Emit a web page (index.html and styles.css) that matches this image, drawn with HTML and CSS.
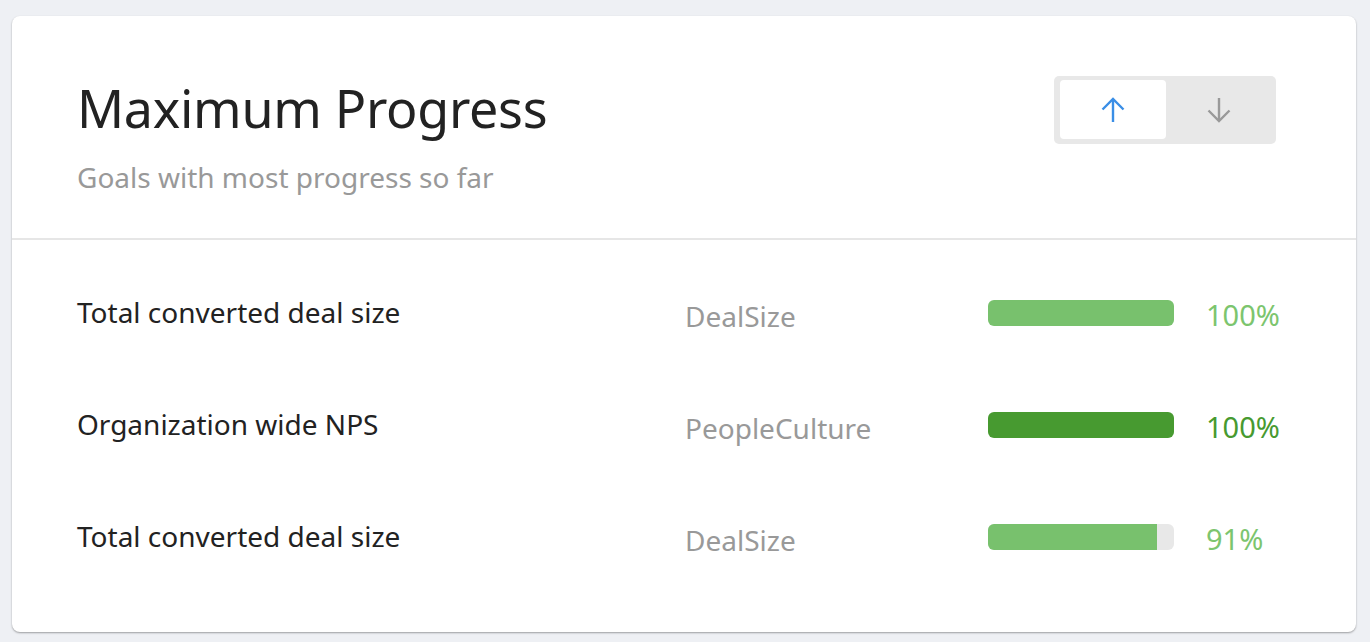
FILE: index.html
```html
<!DOCTYPE html>
<html>
<head>
<meta charset="utf-8">
<link rel="stylesheet" href="styles.css">
</head>
<body>
<div class="card">
  <div class="card-header">
    <div class="heading">
      <h1 class="title">Maximum Progress</h1>
      <p class="subtitle">Goals with most progress so far</p>
    </div>
    <div class="toggle">
      <button class="toggle-btn active" aria-label="Sort ascending">
        <svg width="24" height="26" viewBox="0 0 24 26" fill="none" stroke="currentColor" stroke-width="2.4"><path d="M12 25V2"/><path d="M1.5 12.5L12 2l10.5 10.5"/></svg>
      </button>
      <button class="toggle-btn" aria-label="Sort descending">
        <svg width="24" height="26" viewBox="0 0 24 26" fill="none" stroke="currentColor" stroke-width="2.4"><path d="M12 1v23"/><path d="M1.5 13.5L12 24l10.5-10.5"/></svg>
      </button>
    </div>
  </div>
  <div class="card-body">
    <div class="row">
      <div class="label">Total converted deal size</div>
      <div class="category">DealSize</div>
      <div class="bar"><div class="fill light" style="width:100%"></div></div>
      <div class="pct light-text">100%</div>
    </div>
    <div class="row">
      <div class="label">Organization wide NPS</div>
      <div class="category">PeopleCulture</div>
      <div class="bar"><div class="fill dark" style="width:100%"></div></div>
      <div class="pct dark-text">100%</div>
    </div>
    <div class="row">
      <div class="label">Total converted deal size</div>
      <div class="category">DealSize</div>
      <div class="bar"><div class="fill light" style="width:91%"></div></div>
      <div class="pct light-text">91%</div>
    </div>
  </div>
</div>
</body>
</html>
```
FILE: styles.css
```css
* { box-sizing: border-box; }
html, body { margin: 0; padding: 0; }
body {
  background: #eef0f4;
  font-family: "Noto Sans", "Open Sans", sans-serif;
  padding: 16px 14px 10px 12px;
}
.card {
  background: #fff;
  border-radius: 8px;
  box-shadow: 0 1px 2px rgba(0,0,0,0.35);
  height: 616px;
}
.card-header {
  height: 224px;
  border-bottom: 2px solid #e6e6e6;
  padding: 60px 80px 0 65px;
  display: flex;
  justify-content: space-between;
  align-items: flex-start;
}
.title {
  margin: 0;
  font-weight: 400;
  font-size: 52px;
  line-height: 64px;
  color: #222;
  letter-spacing: -0.3px;
}
.subtitle {
  margin: 21px 0 0;
  font-size: 28px;
  line-height: 32px;
  color: #999;
}
.toggle {
  width: 222px;
  height: 68px;
  background: #e8e8e8;
  border-radius: 5px;
  padding: 4px 4px 5px 6px;
  display: flex;
}
.toggle-btn {
  flex: 1;
  border: 0;
  background: transparent;
  border-radius: 4px;
  display: flex;
  align-items: center;
  justify-content: center;
  color: #999;
  padding: 0;
}
.toggle-btn.active {
  background: #fff;
  color: #3a8ee6;
}
.card-body {
  padding: 16px 76px 40px 65px;
}
.row {
  height: 112px;
  display: grid;
  grid-template-columns: 608px 303px 186px 1fr;
  align-items: center;
}
.label {
  font-size: 28px;
  color: #222;
}
.category {
  font-size: 28px;
  color: #999;
  padding-top: 8px;
}
.bar {
  height: 26px;
  margin-top: 2px;
  background: #e8e8e8;
  border-radius: 6px;
  overflow: hidden;
}
.fill { height: 100%; }
.fill.light { background: #78c16d; }
.fill.dark { background: #479a30; }
.pct {
  font-size: 29px;
  padding-left: 32px;
  padding-top: 5px;
}
.light-text { color: #7cc56e; }
.dark-text { color: #479a30; }
```
